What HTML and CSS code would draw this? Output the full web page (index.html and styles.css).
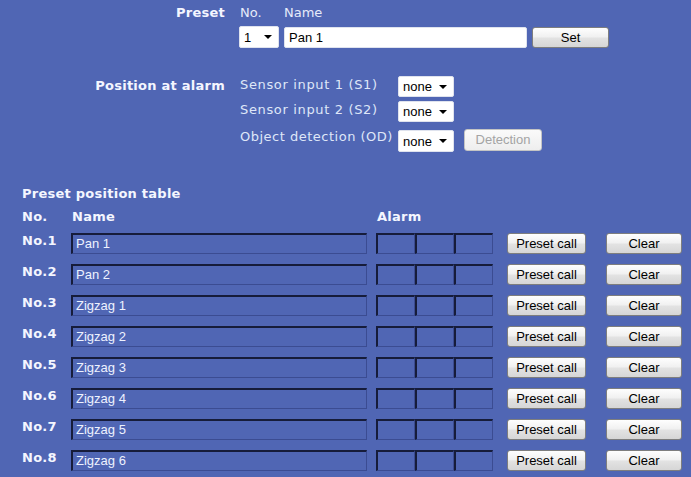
FILE: index.html
```html
<!DOCTYPE html>
<html>
<head>
<meta charset="utf-8">
<link rel="stylesheet" href="styles.css">
</head>
<body>
<div class="page">
  <div class="settings">
    <div class="label label-preset">Preset</div>
    <div class="preset">
      <div class="preset-heads"><span class="h-no">No.</span><span>Name</span></div>
      <div class="preset-controls">
        <span class="sel sel-no"><select><option>1</option></select><svg class="arrow" width="8" height="4" viewBox="0 0 8 4"><path d="M0 0H8L4 4Z" fill="#000"/></svg></span>
        <input class="name-input" type="text" value="Pan 1">
        <button class="btn btn-set">Set</button>
      </div>
    </div>

    <div class="label label-alarm">Position at alarm</div>
    <div class="sensors">
      <div class="s-label">Sensor input 1 (S1)</div>
      <div class="s-ctrl"><span class="sel sel-none"><select><option>none</option></select><svg class="arrow" width="8" height="4" viewBox="0 0 8 4"><path d="M0 0H8L4 4Z" fill="#000"/></svg></span></div>
      <div class="s-label">Sensor input 2 (S2)</div>
      <div class="s-ctrl"><span class="sel sel-none"><select><option>none</option></select><svg class="arrow" width="8" height="4" viewBox="0 0 8 4"><path d="M0 0H8L4 4Z" fill="#000"/></svg></span></div>
      <div class="s-label s-od">Object detection (OD)</div>
      <div class="s-ctrl s-od-ctrl"><span class="sel sel-none"><select><option>none</option></select><svg class="arrow" width="8" height="4" viewBox="0 0 8 4"><path d="M0 0H8L4 4Z" fill="#000"/></svg></span><button class="btn btn-detect" disabled>Detection</button></div>
    </div>
  </div>

  <div class="table-sec">
    <div class="t-title">Preset position table</div>
    <div class="t-head"><span class="c-no">No.</span><span class="c-name">Name</span><span class="c-alarm">Alarm</span></div>
    <div class="t-row"><span class="c-no">No.1</span><div class="field">Pan 1</div><div class="alarms"><div class="abox"></div><div class="abox"></div><div class="abox"></div></div><button class="btn btn-call">Preset call</button><button class="btn btn-clear">Clear</button></div>
    <div class="t-row"><span class="c-no">No.2</span><div class="field">Pan 2</div><div class="alarms"><div class="abox"></div><div class="abox"></div><div class="abox"></div></div><button class="btn btn-call">Preset call</button><button class="btn btn-clear">Clear</button></div>
    <div class="t-row"><span class="c-no">No.3</span><div class="field">Zigzag 1</div><div class="alarms"><div class="abox"></div><div class="abox"></div><div class="abox"></div></div><button class="btn btn-call">Preset call</button><button class="btn btn-clear">Clear</button></div>
    <div class="t-row"><span class="c-no">No.4</span><div class="field">Zigzag 2</div><div class="alarms"><div class="abox"></div><div class="abox"></div><div class="abox"></div></div><button class="btn btn-call">Preset call</button><button class="btn btn-clear">Clear</button></div>
    <div class="t-row"><span class="c-no">No.5</span><div class="field">Zigzag 3</div><div class="alarms"><div class="abox"></div><div class="abox"></div><div class="abox"></div></div><button class="btn btn-call">Preset call</button><button class="btn btn-clear">Clear</button></div>
    <div class="t-row"><span class="c-no">No.6</span><div class="field">Zigzag 4</div><div class="alarms"><div class="abox"></div><div class="abox"></div><div class="abox"></div></div><button class="btn btn-call">Preset call</button><button class="btn btn-clear">Clear</button></div>
    <div class="t-row"><span class="c-no">No.7</span><div class="field">Zigzag 5</div><div class="alarms"><div class="abox"></div><div class="abox"></div><div class="abox"></div></div><button class="btn btn-call">Preset call</button><button class="btn btn-clear">Clear</button></div>
    <div class="t-row"><span class="c-no">No.8</span><div class="field">Zigzag 6</div><div class="alarms"><div class="abox"></div><div class="abox"></div><div class="abox"></div></div><button class="btn btn-call">Preset call</button><button class="btn btn-clear">Clear</button></div>
  </div>
</div>
</body>
</html>
```

FILE: styles.css
```css
html, body {
  margin: 0;
  padding: 0;
  background: #5066b4;
}
body {
  width: 691px;
  height: 477px;
  overflow: hidden;
  font-family: "DejaVu Sans", Verdana, sans-serif;
  font-size: 13px;
  color: #eef2ff;
}
.page {
  padding-top: 5px;
}
.settings {
  display: grid;
  grid-template-columns: 225px auto;
  column-gap: 15px;
  align-items: start;
}
.label {
  text-align: right;
  font-weight: bold;
  color: #f4f6ff;
  line-height: 16px;
  letter-spacing: 0.25px;
}
.preset-heads {
  display: flex;
  line-height: 16px;
  color: #e6ebfa;
}
.h-no {
  width: 44px;
}
.preset-controls {
  display: flex;
  align-items: flex-start;
  margin-top: 5px;
  margin-left: -1px;
}
.sel {
  position: relative;
  display: inline-block;
}
.sel select {
  appearance: none;
  -webkit-appearance: none;
  display: block;
  background: #fff;
  border: 1px solid #dfe3ee;
  border-radius: 2px;
  font-family: "Liberation Sans", Arial, sans-serif;
  font-size: 13px;
  color: #000;
  padding: 0 0 0 4px;
  margin: 0;
}
.sel .arrow {
  position: absolute;
  right: 7px;
  top: 50%;
  margin-top: -2px;
  pointer-events: none;
}
.sel-no select {
  width: 40px;
  height: 22px;
}
.sel-none select {
  width: 56px;
  height: 21px;
}
.name-input {
  width: 243px;
  height: 21px;
  box-sizing: border-box;
  margin: 1px 0 0 5px;
  border: 1px solid #dfe3ee;
  border-radius: 2px;
  background: #fff;
  padding: 0 4px;
  font-family: "Liberation Sans", Arial, sans-serif;
  font-size: 13px;
  color: #000;
}
.btn {
  box-sizing: border-box;
  margin: 0;
  padding: 0;
  border: 1px solid #7e7e7e;
  border-radius: 3px;
  background: linear-gradient(#fefefe 0%, #f1f1f1 45%, #e2e2e2 55%, #d6d6d6 100%);
  font-family: "Liberation Sans", Arial, sans-serif;
  font-size: 13px;
  color: #000;
  line-height: 18px;
}
.btn-set {
  width: 77px;
  height: 21px;
  margin: 1px 0 0 5px;
}
.label-alarm {
  margin-top: 28px;
  padding-top: 2px;
}
.sensors {
  margin-top: 28px;
  display: grid;
  grid-template-columns: 158px auto;
  grid-auto-rows: auto;
  row-gap: 4px;
  color: #dfe6f8;
}
.s-label {
  line-height: 16px;
  padding-top: 1px;
  letter-spacing: 0.65px;
}
.s-od {
  padding-top: 3px;
  letter-spacing: 0.5px;
}
.s-ctrl {
  display: flex;
  align-items: flex-start;
}
.s-od-ctrl {
  margin-top: 4px;
}
.s-od-ctrl .sel-none select {
  height: 22px;
}
.btn-detect {
  width: 78px;
  height: 22px;
  margin: -1px 0 0 10px;
  color: #a4a4a4;
  border-color: #c4c4c4;
  background: linear-gradient(#fafafa, #eeeeee);
}

.table-sec {
  margin-top: 34px;
  padding-left: 22px;
}
.t-title {
  font-weight: bold;
  color: #f4f6ff;
  line-height: 16px;
  letter-spacing: 0.25px;
}
.t-head {
  display: flex;
  margin-top: 7px;
  font-weight: bold;
  color: #f4f6ff;
  line-height: 16px;
  letter-spacing: 0.25px;
}
.t-head .c-no {
  width: 50px;
}
.t-head .c-name {
  width: 305px;
}
.t-row {
  display: flex;
  align-items: flex-start;
  height: 31px;
}
.t-head + .t-row {
  margin-top: 8px;
}
.t-row .c-no {
  width: 49px;
  font-weight: bold;
  color: #f4f6ff;
  line-height: 16px;
  padding-top: 0;
  letter-spacing: 0.25px;
}
.field {
  box-sizing: border-box;
  width: 296px;
  height: 21px;
  border-style: solid;
  border-width: 2px 1px 1px 2px;
  border-color: #161c3a #3b4c92 #3b4c92 #161c3a;
  font-family: "Liberation Sans", Arial, sans-serif;
  font-size: 13px;
  color: #eef2ff;
  padding-left: 3px;
  line-height: 18px;
}
.alarms {
  display: flex;
  margin-left: 9px;
}
.abox {
  box-sizing: border-box;
  width: 39px;
  height: 21px;
  border-style: solid;
  border-width: 2px 1px 1px 2px;
  border-color: #161c3a #3b4c92 #3b4c92 #161c3a;
}
.btn-call {
  width: 79px;
  height: 21px;
  margin-left: 14px;
}
.btn-clear {
  width: 76px;
  height: 21px;
  margin-left: 20px;
}
```
